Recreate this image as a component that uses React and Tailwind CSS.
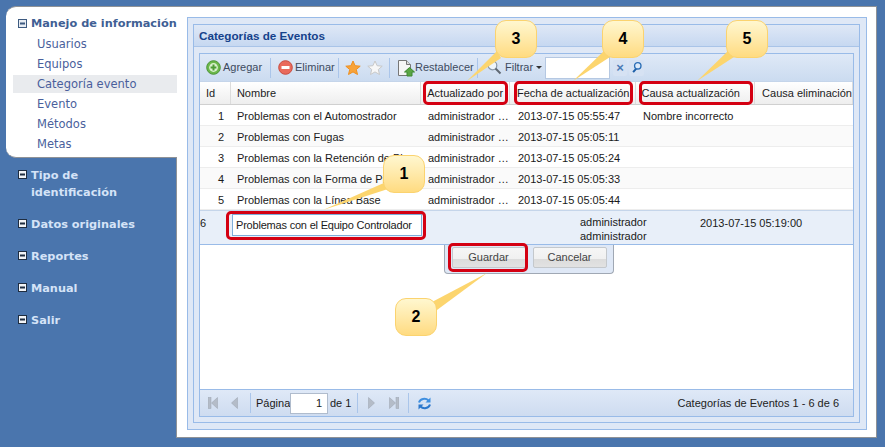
const sans = "font-['Liberation_Sans',Arial,sans-serif]";

function Minus({ dark }) {
  return (
    <svg width="9" height="9" viewBox="0 0 9 9" className="shrink-0">
      <rect x="0.5" y="0.5" width="8" height="8" fill={dark ? "#e8edf4" : "#f2f4f7"} stroke={dark ? "#3d5a80" : "#1f2d40"} />
      <rect x="2" y="3.5" width="5" height="2" fill={dark ? "#3d5a80" : "#1f2d40"} />
    </svg>
  );
}

function SideHead({ children, className = "" }) {
  return (
    <div className={`flex items-start pl-[18px] ${className}`}>
      <div className="mt-[3px] mr-[4px]"><Minus /></div>
      <div className="font-['DejaVu_Sans',sans-serif] font-bold text-[11.3px] leading-[17px] text-[#d5e3f7]">{children}</div>
    </div>
  );
}

function Sep() {
  return <div className="w-px h-[20px] bg-[#aac5ea] shrink-0" />;
}

const Plus = () => (
  <svg width="15" height="15" viewBox="0 0 15 15"><circle cx="7.5" cy="7.5" r="6.8" fill="#6cb84a" stroke="#4d9437" /><circle cx="7.5" cy="7.5" r="4.4" fill="#d9f0cd" /><path d="M7.5 4.6v5.8M4.6 7.5h5.8" stroke="#4f9c37" strokeWidth="2" /></svg>
);
const Del = () => (
  <svg width="15" height="15" viewBox="0 0 15 15"><circle cx="7.5" cy="7.5" r="6.8" fill="#e96a5c" stroke="#c94b3f" /><rect x="3.5" y="6" width="8" height="3" fill="#fff" /></svg>
);
const Star = ({ fill, stroke }) => (
  <svg width="16" height="16" viewBox="0 0 16 16"><path d="M8 1l2.100 4.700 5.100.5-3.900 3.300 1.200 5L8 11.900l-4.500 2.600 1.200-5L.8 6.200l5.100-.5z" fill={fill} stroke={stroke} /></svg>
);
const Doc = () => (
  <svg width="18" height="18" viewBox="0 0 18 18"><path d="M1.500 1.500h8l4 4v11h-12z" fill="#f6f6f6" stroke="#777" /><path d="M9.500 1.500v4h4" fill="#ddd" stroke="#777" /><path d="M12.500 8.500l5 4.500h-2.500v4h-5v-4H7.500z" fill="#5aa544" stroke="#3f8a30" /></svg>
);
const Glass = () => (
  <svg width="15" height="15" viewBox="0 0 15 15"><circle cx="5.500" cy="5.500" r="4.300" fill="#eef5fc" stroke="#8a98a8" strokeWidth="1.200" /><path d="M8.500 8.500L13.500 13.500" stroke="#5f6873" strokeWidth="2" /></svg>
);
const Blue = () => (
  <svg width="11" height="13" viewBox="0 0 13 15"><path d="M7 8L2.500 13" stroke="#1d5fa8" strokeWidth="2.400" /><circle cx="8" cy="5.500" r="3.800" fill="#dceafa" stroke="#2a6db5" strokeWidth="1.600" /></svg>
);
const Refresh = () => (
  <svg width="15" height="15" viewBox="0 0 15 15" fill="none"><path d="M2 6.500C3 2.800 8.500 1.500 11.500 4.500" stroke="#3f8fe0" strokeWidth="2" /><path d="M13.500 1.500v5h-5z" fill="#3f8fe0" /><path d="M13 8.500C12 12.200 6.500 13.500 3.500 10.500" stroke="#2c78cc" strokeWidth="2" /><path d="M1.500 13.500v-5h5z" fill="#2c78cc" /></svg>
);
const Tri = ({ dir = "l", bar }) => (
  <svg width="10" height="12" viewBox="0 0 10 12">
    {dir === "l" ? (
      <>
        {bar && <rect x="0" y="0.500" width="3" height="11" fill="#b4bcc8" stroke="#9aa3af" strokeWidth="0.500" />}
        <path d={bar ? "M9.500 0.500v11L3.500 6z" : "M6.500 0.500v11L0.500 6z"} fill="#b4bcc8" stroke="#9aa3af" strokeWidth="0.500" />
      </>
    ) : (
      <>
        <path d="M0.500 0.500v11L6.500 6z" fill="#b4bcc8" stroke="#9aa3af" strokeWidth="0.500" />
        {bar && <rect x="7" y="0.500" width="3" height="11" fill="#b4bcc8" stroke="#9aa3af" strokeWidth="0.500" />}
      </>
    )}
  </svg>
);

const cols = ["w-[31px]", "w-[191px]", "w-[89px]", "w-[126px]", "w-[120px]", "flex-1"];

function Head({ i, align = "pl-[6px]", children }) {
  return (
    <div className={`${cols[i]} ${align} h-full flex items-center border-r border-[#dcdcdc] text-[#1c1c1c] whitespace-nowrap`}>
      {children}
    </div>
  );
}

const rows = [
  [1, "Problemas con el Automostrador", "2013-07-15 05:55:47", "Nombre incorrecto"],
  [2, "Problemas con Fugas", "2013-07-15 05:05:11", ""],
  [3, "Problemas con la Retención de Pico", "2013-07-15 05:05:24", ""],
  [4, "Problemas con la Forma de Pico", "2013-07-15 05:05:33", ""],
  [5, "Problemas con la Línea Base", "2013-07-15 05:05:44", ""],
];

function Row({ r, alt }) {
  return (
    <div className={`flex h-[21px] items-center pt-[2px] border-b border-[#ededed] text-[#1a1a1a] whitespace-nowrap ${alt ? "bg-[#fafafa]" : "bg-white"}`}>
      <div className={`${cols[0]} pr-[7px] text-right`}>{r[0]}</div>
      <div className={`${cols[1]} pl-[6px] overflow-hidden`}>{r[1]}</div>
      <div className={`${cols[2]} pl-[6px]`}>administrador …</div>
      <div className={`${cols[3]} pl-[7px]`}>{r[2]}</div>
      <div className={`${cols[4]} pl-[6px]`}>{r[3]}</div>
    </div>
  );
}

function Callout({ n, className }) {
  return (
    <div className={`absolute w-[42px] h-[38px] rounded-[11px] border border-[#fbd36f] bg-gradient-to-b from-[#fff7cf] to-[#ffdb80] flex items-center justify-center ${sans} font-bold text-[16px] text-black ${className}`}>
      {n}
    </div>
  );
}

function Red({ className }) {
  return <div className={`absolute border-[3px] border-[#d40012] rounded-[5px] ${className}`} />;
}

function Btn({ children }) {
  return (
    <div className="w-[74px] h-[21px] rounded-[2px] border border-[#c4c8cc] bg-[linear-gradient(#f6f6f6_0,#f0f0f0_60%,#dcdcdc_60%,#e2e2e2_100%)] flex items-center justify-center text-[#444] text-[11px]">
      {children}
    </div>
  );
}

export default function App() {
  return (
    <div className="relative w-[885px] h-[447px] overflow-hidden bg-[#4a75ad] flex">
      <aside className="w-[177px] h-[438px] shrink-0 pt-[6px] pl-[6px] flex flex-col">
        <div className="h-[152px] shrink-0 bg-white rounded-l-[10px] border-t border-b border-[#8f9296] pt-[8px]">
          <div className="flex items-start pl-[12px] mb-[1px]">
            <div className="mt-[4px] mr-[4px]"><Minus dark /></div>
            <div className="font-['DejaVu_Sans',sans-serif] font-bold text-[11.3px] leading-[18px] text-[#3f5f94] whitespace-nowrap">Manejo de información</div>
          </div>
          <div className="font-['DejaVu_Sans',sans-serif] text-[11.5px] text-[#4a5f9c]">
            {["Usuarios", "Equipos", "Categoría evento", "Evento", "Métodos", "Metas"].map((t) => (
              <div key={t} className={t === "Categoría evento" ? "h-[18px] my-[1px] pt-[1px] flex items-center bg-[#e9ebee] ml-[7px] pl-[24px]" : "h-[20px] pt-[1px] flex items-center pl-[31px]"}>{t}</div>
            ))}
          </div>
        </div>
        <div className="flex-1 pt-[9px] -ml-[6px] border-r border-[#8f9296]">
          <SideHead>Tipo de<br />identificación</SideHead>
          <SideHead className="mt-[15px]">Datos originales</SideHead>
          <SideHead className="mt-[15px]">Reportes</SideHead>
          <SideHead className="mt-[15px]">Manual</SideHead>
          <SideHead className="mt-[15px]">Salir</SideHead>
        </div>
      </aside>

      <main className="mt-[6px] w-[700px] h-[432px] bg-white border-t border-r border-b border-[#8f9296] pl-[10px] pt-[10px]">
        <div className="w-[680px] h-[413px] border border-[#99bbe8] bg-[#dfe8f6] pt-[6px] pl-[5px]">
          <div className={`w-[667px] h-[399px] border border-[#99bbe8] bg-[#dfe8f6] flex flex-col ${sans} text-[11px]`}>
            <div className="h-[22px] shrink-0 bg-gradient-to-b from-[#dfe8f6] to-[#c6d8f1] border-b border-[#a9c4e8] px-[5px] flex items-center text-[#15428b] font-bold text-[11.7px]">
              Categorías de Eventos
            </div>
            <div className="mx-[5px] mt-[6px] mb-[5px] flex-1 border border-[#99bbe8] flex flex-col min-h-0 bg-white">
              <div className="h-[27px] shrink-0 bg-gradient-to-b from-[#dfe9f7] to-[#cbdbf0] flex items-center text-[#3d4a5e] whitespace-nowrap">
                <div className="ml-[6px] flex items-center"><Plus /></div>
                <span className="ml-[2px] w-[40px]">Agregar</span>
                <div className="ml-[7px]"><Sep /></div>
                <div className="ml-[7px] flex items-center"><Del /></div>
                <span className="ml-[2px] w-[36px]">Eliminar</span>
                <div className="ml-[7px]"><Sep /></div>
                <div className="ml-[6px] flex"><Star fill="#f8a33a" stroke="#ef9020" /></div>
                <div className="ml-[6px] flex"><Star fill="#f7f7f7" stroke="#c8c8c8" /></div>
                <div className="ml-[6px]"><Sep /></div>
                <div className="ml-[7px] flex"><Doc /></div>
                <span className="w-[58px]">Restablecer</span>
                <div className="ml-[4px]"><Sep /></div>
                <div className="ml-[9px] flex"><Glass /></div>
                <span className="ml-[3px] w-[31px]">Filtrar</span>
                <div className="w-0 h-0 border-x-[3px] border-x-transparent border-t-[3px] border-t-[#333]" />
                <div className="ml-[3px] w-[65px] h-[22px] bg-white border border-[#b5c8e2]" />
                <div className="ml-[3px] w-[14px] h-[16px] rounded-[2px] bg-[#d6e2f3] flex items-center justify-center text-[#4a7ab5] font-bold text-[13px]">×</div>
                <div className="ml-[2px] w-[15px] h-[16px] rounded-[2px] bg-[#d6e2f3] flex items-center justify-center"><Blue /></div>
              </div>
              <div className="h-[24px] shrink-0 flex bg-gradient-to-b from-white to-[#eeeeee] border-b border-[#d0d0d0] border-t border-t-[#c5d5ea]">
                <Head i={0}>Id</Head>
                <Head i={1}>Nombre</Head>
                <Head i={2}>Actualizado por</Head>
                <Head i={3} align="pl-[7px]">Fecha de actualización</Head>
                <Head i={4} align="pl-[6px]">Causa actualización</Head>
                <Head i={5} align="pl-[7px]">Causa eliminación</Head>
              </div>
              <div className="flex-1 min-h-0 relative bg-white">
                {rows.map((r, i) => <Row key={r[0]} r={r} alt={i % 2 === 1} />)}
                <div className="h-[35px] bg-[#e8eff9] border-t border-[#c5d5ea] border-b border-b-[#99bbe8] flex text-[#1a1a1a] relative">
                  <span className="mt-[4px]">6</span>
                  <div className="absolute left-[32px] top-[3px] w-[190px] h-[22px] bg-white border border-[#7eadd9] flex items-center pl-[3px] pt-[1px] whitespace-nowrap tracking-[-0.2px]">Problemas con el Equipo Controlador</div>
                  <div className="absolute left-[380px] top-[4px] leading-[14px]">administrador<br />administrador</div>
                  <div className="absolute left-[500px] top-[4px] whitespace-nowrap">2013-07-15 05:19:00</div>
                </div>
                <div className="absolute left-[244px] top-[140px] w-[170px] h-[29px] bg-[#dfe8f6] border border-t-0 border-[#a0a8b4] rounded-b-[4px] flex items-start justify-center gap-[7px] pt-[2px]">
                  <Btn>Guardar</Btn>
                  <Btn>Cancelar</Btn>
                </div>
              </div>
              <div className="h-[27px] shrink-0 border-t border-[#99bbe8] bg-gradient-to-b from-[#dfe9f7] to-[#cedcf0] flex items-center text-[#1a1a1a] whitespace-nowrap">
                <div className="ml-[8px] flex"><Tri bar /></div>
                <div className="ml-[13px] flex"><Tri /></div>
                <div className="ml-[9px]"><Sep /></div>
                <span className="ml-[5px] w-[34px]">Página</span>
                <div className="w-[38px] h-[21px] bg-white border border-[#b0bccd] flex items-center justify-end pr-[5px]">1</div>
                <span className="ml-[2px] w-[21px]">de 1</span>
                <div className="ml-[6px]"><Sep /></div>
                <div className="ml-[10px] flex"><Tri dir="r" /></div>
                <div className="ml-[11px] flex"><Tri dir="r" bar /></div>
                <div className="ml-[9px]"><Sep /></div>
                <div className="ml-[8px] flex"><Refresh /></div>
                <span className="ml-auto mr-[14px] text-[#222]">Categorías de Eventos 1 - 6 de 6</span>
              </div>
            </div>
          </div>
        </div>
      </main>

      <svg className="absolute left-0 top-0 pointer-events-none" width="885" height="447">
        <g fill="#fcd56e">
          <polygon points="467,81 497,51 501,58" />
          <polygon points="573,81 604,51 610,57" />
          <polygon points="697,81 728,51 734,57" />
          <polygon points="323,210 386,182 388,189" />
          <polygon points="487,273 432,302 437,310" />
        </g>
      </svg>
      <Red className="left-[423px] top-[81px] w-[85px] h-[24px]" />
      <Red className="left-[514px] top-[81px] w-[119px] h-[24px]" />
      <Red className="left-[639px] top-[81px] w-[114px] h-[24px]" />
      <Red className="left-[226px] top-[211px] w-[200px] h-[29px]" />
      <Red className="left-[448px] top-[243px] w-[80px] h-[29px]" />
      <Callout n="3" className="left-[495px] top-[20px]" />
      <Callout n="4" className="left-[602px] top-[20px]" />
      <Callout n="5" className="left-[726px] top-[20px]" />
      <Callout n="1" className="left-[383px] top-[155px]" />
      <Callout n="2" className="left-[395px] top-[298px]" />
    </div>
  );
}
